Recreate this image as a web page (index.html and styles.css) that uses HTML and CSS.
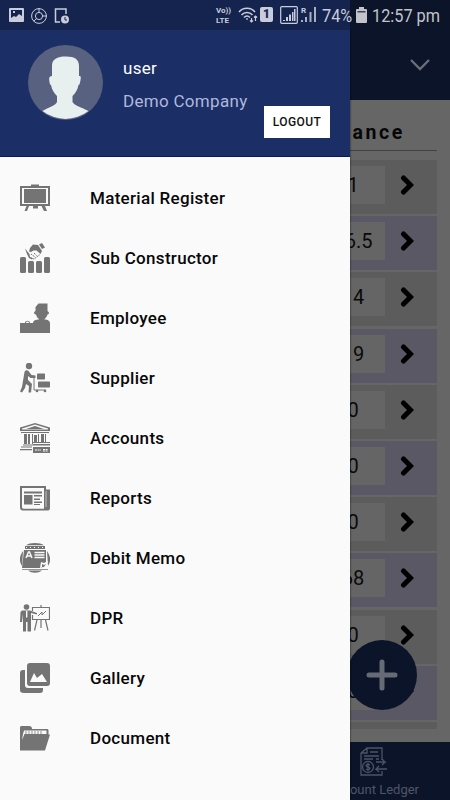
FILE: index.html
```html
<!DOCTYPE html>
<html lang="en">

<head>
    <meta charset="UTF-8">
    <meta name="viewport" content="width=device-width, initial-scale=1.0">
    <title>Demo Company</title>
    <link rel="stylesheet" href="styles.css">
</head>

<body>
    <svg width="0" height="0" class="defs">
        <symbol id="chevron" viewBox="0 0 14 20"><path d="M3.500 3l7 7-7 7" fill="none" stroke="#000" stroke-width="5" stroke-linecap="round"/></symbol>
    </svg>

    <div class="app">
        <!-- page under the drawer -->
        <div class="page">
            <div class="appbar">
                <svg width="22" height="14" viewBox="0 0 22 14"><path d="M2 2l9 9 9-9" fill="none" stroke="#696e79" stroke-width="2.400"/></svg>
            </div>
            <div class="content">
                <h2>Balance</h2>
                <div class="list">
                    <div class="row"><span>1</span><svg><use href="#chevron"/></svg></div>
                    <div class="row"><span>16.5</span><svg><use href="#chevron"/></svg></div>
                    <div class="row"><span>14</span><svg><use href="#chevron"/></svg></div>
                    <div class="row"><span>19</span><svg><use href="#chevron"/></svg></div>
                    <div class="row"><span>0</span><svg><use href="#chevron"/></svg></div>
                    <div class="row"><span>0</span><svg><use href="#chevron"/></svg></div>
                    <div class="row"><span>0</span><svg><use href="#chevron"/></svg></div>
                    <div class="row"><span>68</span><svg><use href="#chevron"/></svg></div>
                    <div class="row"><span>0</span><svg><use href="#chevron"/></svg></div>
                    <div class="row"><span>0</span><svg><use href="#chevron"/></svg></div>
                    <div class="row"></div>
                </div>
            </div>
            <div class="tabbar">
                <svg width="30" height="30" viewBox="0 0 30 30" fill="none" stroke="#4c5365" stroke-width="1.300">
                    <path d="M2 13V7l6-5h15v12M8 2v5H2M2 13v16h21v-4"/>
                    <path d="M11 6h8M5 10h15M5 13h9M17 13h3M17 16h9l-3-3M26 16l-3 3M28 23H17l3-3M17 23l3 3"/>
                    <circle cx="9" cy="21" r="5.500"/>
                    <path d="M11 19c-1-1-4-1-4 .7s4 1 4 2.600-3 1.700-4 .5M9 17v8"/>
                </svg>
                <span>Account Ledger</span>
            </div>
        </div>

        <div class="fab">
            <svg width="32" height="32" viewBox="0 0 32 32"><path d="M16 3v26M3 16h26" stroke="#666b75" stroke-width="5" stroke-linecap="round"/></svg>
        </div>

        <div class="drawer">
            <div class="profile">
                <svg class="avatar" width="75" height="75" viewBox="0 0 75 75">
                    <circle cx="37.500" cy="37.500" r="37.500" fill="#596180"/>
                    <path fill="#e8efef" d="M24 31V21c0-7 5-9.500 14-9.500s13 3 13 9.500v10c2 0 2 1 1.500 4s-1 5-2 5c-1 5-3 8-6 11v6c2 4 9 5 16 9a37.500 37.500 0 0 1-46 0c6-4 13-5 14.500-9v-6c-3-3-5-6-6-11-1 0-1.500-2-1.800-5s.8-4 2.800-4z"/>
                </svg>
                <div class="who">
                    <div class="name">user</div>
                    <div class="company">Demo Company</div>
                </div>
                <button class="logout">LOGOUT</button>
            </div>

            <ul class="menu">
                <li>
                    <svg viewBox="0 0 30 30"><path d="M11 3V1.500h8V3h11v20h-5l2 5h-3l-2.500-5H18v2.500h-5V23H9l-2 5H4.500l2-5H0V3zM2 5v16h26V5z" fill-rule="evenodd"/><path d="M4 6h22v14H4z"/></svg>
                    <span>Material Register</span>
                </li>
                <li>
                    <svg viewBox="0 0 30 30"><rect y="14" width="6" height="16" rx="1.500"/><rect x="8" y="18" width="6" height="12" rx="1.500"/><rect x="16" y="18" width="6" height="12" rx="1.500"/><rect x="24" y="14" width="6" height="16" rx="1.500"/><path d="M10 5l3-3.500 5 .5 4 6-1.500 3-4-3.500h-3L11 9l-2-.5zM19 1.500L22 0l3 4.500L22 6z"/><path d="M5 5.500l4.500 5.500.5 3 3 1.500-1 1-3-1.500-2-4z"/><path d="M9 14l5 2 6-4.500M11 11l4 3M14 10l3 3" fill="none" stroke="#747474" stroke-dasharray="1.500 .7"/></svg>
                    <span>Sub Constructor</span>
                </li>
                <li>
                    <svg viewBox="0 0 30 30"><path d="M15.500 8V4l3-3.500h9V8c2 1 2 3 0 3.500-.5 2.500-2 3.500-3 4.500v.5c3 0 5.500 1 5.500 4V30H0V20h5c0-3 5-3 5 0h3c0-2.500 3-3.500 6-3.500V16c-1.500-1-2.500-2-3-4.500-3-.5-2-3-.5-3.500z"/><path d="M6 20c0-2 3-2 3 0z" fill="#fafafa"/></svg>
                    <span>Employee</span>
                </li>
                <li>
                    <svg viewBox="0 0 30 30"><circle cx="9" cy="3" r="3.200"/><path d="M4.500 9c.5-2 3-2 4-1l3 4 4 .5V15h-5L8 13v4l4 4-1 8.500H8.500L9 23l-3-2-1 4-3 4.500-2-1L2 24z"/><path d="M14 13v14h12" fill="none" stroke="#747474"/><rect x="17" y="10.500" width="8" height="6" rx=".7"/><rect x="18" y="18.500" width="12" height="6" rx=".7"/><circle cx="17" cy="28" r="1.300"/><circle cx="25" cy="28" r="1.300"/></svg>
                    <span>Supplier</span>
                </li>
                <li>
                    <svg viewBox="0 0 30 30"><path d="M0 4.500L15 0l15 4.500V8H0zM2 5.500v1h26v-1L15 1.500z" fill-rule="evenodd"/><path d="M6 6l9-3 9 3zM1 9h28v1H1zM4 11h3v10H4zM8 11h2v10H8zM12 11h1v10h-1zM14 12h3v8h-3zM18 11h1v8h-1zM21 11h3v8h-3zM25 11h1v8h-1zM3 21.500h10v1H3zM1 23.500h11v1H1zM0 26h12v1.200H0zM13 19h17v1H13zM13 21h17v1.500H13zM13 24h17v6H13z"/><path d="M15 27h6M23 26.500h5M23 28h5" stroke="#fafafa" stroke-dasharray="2 .6"/></svg>
                    <span>Accounts</span>
                </li>
                <li>
                    <svg viewBox="0 0 30 30"><path fill-rule="evenodd" d="M0 3h26v3.500h4V25c0 2-1 2.500-3 2.500H3c-2 0-3-1-3-3zM2 5v19c0 1.200.5 1.700 1.500 1.700H24V5z"/><path d="M4 8.500h18v2H4zM4 12h8.500v9.500H4zM14 12h8v1.500h-8zM14 15.500h6V17h-6zM14 18.500h8V20h-8zM14 21h6v1h-6z"/><path d="M26 8v16" stroke="#fafafa" stroke-width=".6"/></svg>
                    <span>Reports</span>
                </li>
                <li>
                    <svg viewBox="0 0 30 30"><path d="M6 2.200C10-.7 20-.7 24 2.200zM3 8c-4 6-4 10-1 15zM27 8c4 6 4 10 1 15zM8 27.500h14c-4 3-10 3-14 0zM5 3h20v3H5zM4 7h22v12l-4 6H2z"/><path d="M6 4.500h19" stroke="#fafafa" stroke-width="1.200" stroke-dasharray="1 3"/><path d="M6 15l2.500-6h1L12 15M7 13h4M14.500 9.500h10M14.500 12h10M14.500 14.500h10" fill="none" stroke="#fafafa" stroke-width="1.400"/><path d="M20 25l1-6 3 1 4-2-3 6z" fill="#fafafa"/><path d="M22 24v-3l2 1 2-1-2 3zM2 26h26v.8H2z"/></svg>
                    <span>Debit Memo</span>
                </li>
                <li>
                    <svg viewBox="0 0 30 30"><circle cx="6.500" cy="4" r="2.800"/><path d="M2 7.500h8l7 2.500v1.500L11 10v18.500H7.500V19H6v9.500H3V11l-1 8H0l.5-10z"/><path d="M12.500 8V4.500h17v12h-17V12M21 2v2M17 17l-2.500 10.500M25.500 17l2.500 10.500M21 17v8" fill="none" stroke="#747474" stroke-width="1.200"/><path d="M18 13l4-4v3l4-4" fill="none" stroke="#747474"/><path d="M6 8v6l.7 1 .7-1V8z" fill="#fafafa"/></svg>
                    <span>DPR</span>
                </li>
                <li>
                    <svg viewBox="0 0 30 30"><path d="M10 0h17c2 0 3 1 3 3v17c0 2-1 3-3 3H10c-2 0-3-1-3-3V3c0-2 1-3 3-3zM3 7h2v15c0 2 1 3 3 3h15v2c0 2-1 3-3 3H4c-3 0-4-1-4-3V10c0-2 1-3 3-3z"/><path d="M10 19l4-9 3 5 5-4 5 8z" fill="#fafafa"/></svg>
                    <span>Gallery</span>
                </li>
                <li>
                    <svg viewBox="0 0 30 30"><path d="M0 5c0-1.500.5-2 2-2h7c2 0 3 1 3 3h15c1 0 1.500.5 1.500 1.500v4H30L25 27.500H0z"/><path d="M2 17l1-6 1-3.500h22.500V11H4.500z" fill="#fafafa"/><path d="M6 8v3M9 8v3M12 8v3M15 8v3M18 8v3M21 8v3" stroke="#747474" stroke-width=".8"/></svg>
                    <span>Document</span>
                </li>
            </ul>
        </div>

        <div class="statusbar">
            <div class="notifications">
                <svg width="15" height="15" viewBox="0 0 15 15"><path fill-rule="evenodd" fill="#c9cddb" d="M1 0h13q1 0 1 1v12q0 1-1 1H1q-1 0-1-1V1q0-1 1-1zM2 10l3-2 2 1 3-3 3 2V2H2zM4 3h2v2H4z"/></svg>
                <svg width="16" height="16" viewBox="0 0 16 16" fill="none" stroke="#c9cddb"><circle cx="8" cy="8" r="7.400"/><circle cx="8" cy="8" r="3.600"/><path d="M8 0v4.500M11.500 8H16M5.500 10.500l-2.700 2.700"/></svg>
                <svg width="15" height="16" viewBox="0 0 15 16"><path d="M6 14H1.500V1H12v5" fill="none" stroke="#c9cddb" stroke-width="1.500"/><circle cx="11" cy="11.500" r="4" fill="#c9cddb"/><path d="M11 9v3h2" fill="none" stroke="#15254d"/></svg>
            </div>
            <div class="system">
                <div class="volte"><span>Vo))</span><span>LTE</span></div>
                <svg class="wifi" width="20" height="16" viewBox="0 0 20 16" fill="none" stroke="#c9cddb" stroke-width="1.500"><path d="M1 5c4-5 12-5 16 0M3.500 8c3-3.500 8-3.500 11 0M6 10.500c2-2 4-2 6 0"/><path d="M9 11v2M13.500 11v4M12 13.500l1.500 1.500 1.500-1.500M17.500 14V9M16 10.500L17.500 9l1.500 1.500" stroke-width="1.200"/></svg>
                <div class="sim">1</div>
                <svg class="signal" width="18" height="18" viewBox="0 0 18 18"><rect x=".7" y=".7" width="16.600" height="16.600" rx="1" fill="none" stroke="#c9cddb" stroke-width="1.200"/><path d="M3 14h2v1H3zM6 11h2v4H6zM9 8.500h2V15H9zM12 6h1.500v9H12zM14 3h1.500v12H14z" fill="#c9cddb"/></svg>
                <div class="roaming">R<svg width="16" height="16" viewBox="0 0 16 16"><path d="M0 13h2v2H0zM4 10h2v5H4zM8.500 5h2v10h-2zM13 0h2v15h-2z" fill="#a9afc2"/></svg></div>
                <span class="percent">74%</span>
                <svg class="battery" width="11" height="16" viewBox="0 0 11 16"><path d="M3 0h5v2h2q1 0 1 1v12q0 1-1 1H1q-1 0-1-1V3q0-1 1-1h2z" fill="#c2c4ca"/><path d="M1.500 4h8v1.500h-8z" fill="#3f4556"/></svg>
                <span class="clock">12:57 pm</span>
            </div>
        </div>
    </div>
</body>

</html>
```
FILE: styles.css
```css
* {
    padding: 0;
    margin: 0;
    box-sizing: border-box;
}

body {
    font-family: Roboto, "Liberation Sans", sans-serif;
    background-color: #666;
}

svg {
    display: block;
    flex-shrink: 0;
}

.defs {
    position: absolute;
}

.app {
    position: relative;
    width: 450px;
    height: 800px;
    overflow: hidden;
}

/* page */
.page {
    display: flex;
    flex-direction: column;
    height: 800px;
    background-color: #666;
}

.appbar {
    display: flex;
    justify-content: flex-end;
    height: 100px;
    padding: 58px 19px 0 0;
    background-color: #0b1429;
}

.content {
    height: 642px;
    padding: 0 13px 13px;
    overflow: hidden;
    display: flex;
    flex-direction: column;
}

h2 {
    height: 51px;
    padding: 21px 32px 0 0;
    border-bottom: 1px solid #414141;
    text-align: right;
    font-size: 19.5px;
    line-height: 24px;
    letter-spacing: 2.6px;
    color: #060606;
    flex-shrink: 0;
}

.list {
    margin-top: 9px;
    flex: 1;
    overflow: hidden;
}

.row {
    display: flex;
    justify-content: flex-end;
    height: 54px;
    margin-bottom: 2.2px;
    padding: 6px 23px 0 0;
    background-color: #5c5c5c;
}

.row:nth-child(even) {
    background-color: #5a5864;
}

.row span {
    width: 64px;
    height: 38px;
    margin-right: 15px;
    background-color: #656565;
    color: #0a0a0a;
    font-size: 20px;
    line-height: 39px;
    text-align: center;
}

.row svg {
    width: 14px;
    height: 20px;
    margin-top: 9px;
}

.tabbar {
    flex: 1;
    display: flex;
    flex-direction: column;
    align-items: flex-end;
    padding-top: 4px;
    background-color: #0b1429;
}

.tabbar svg {
    margin-right: 61px;
}

.tabbar span {
    margin: 5px 31px 0 0;
    font-size: 13px;
    line-height: 18px;
    color: #505668;
}

.fab {
    position: absolute;
    left: 347px;
    top: 640px;
    width: 70px;
    height: 70px;
    border-radius: 50%;
    background-color: #0b1429;
    display: flex;
    align-items: center;
    justify-content: center;
}

/* drawer */
.drawer {
    position: absolute;
    left: 0;
    top: 0;
    width: 350px;
    height: 800px;
    background-color: #fafafa;
    box-shadow: 0 0 2px rgba(0, 0, 0, .7);
}

.profile {
    display: flex;
    height: 157px;
    padding: 45px 20px 0 28px;
    background-color: #1b2f66;
    border-bottom: 1px solid #0b1b52;
}

.who {
    width: 128px;
    margin-left: 20px;
    font-size: 17px;
    line-height: 22px;
    letter-spacing: .3px;
    white-space: nowrap;
}

.name {
    margin-top: 12px;
    color: #fff;
}

.company {
    margin-top: 11px;
    color: #b0b8dc;
}

.logout {
    width: 66px;
    height: 32px;
    margin: 61px 0 0 auto;
    border: none;
    background-color: #fff;
    color: #111;
    font-family: inherit;
    font-size: 12px;
    font-weight: 500;
    letter-spacing: .4px;
}

.menu {
    list-style: none;
    padding-top: 11px;
}

.menu li {
    display: flex;
    align-items: center;
    height: 60px;
    padding-left: 20px;
    font-size: 17px;
    font-weight: 500;
    letter-spacing: .3px;
    color: #080808;
}

.menu svg {
    width: 30px;
    height: 30px;
    margin-right: 40px;
    fill: #747474;
}

/* status bar */
.statusbar {
    position: absolute;
    left: 0;
    top: 0;
    width: 450px;
    height: 30px;
    display: flex;
    justify-content: space-between;
    background: linear-gradient(to right, #15244e 350px, #0b1429 350px);
    color: #c9cddb;
}

.notifications {
    display: flex;
    gap: 7px;
    padding: 8px 0 0 9px;
}

.system {
    display: flex;
    padding: 7px 10px 0 0;
    white-space: nowrap;
}

.volte {
    display: flex;
    flex-direction: column;
    width: 16px;
    margin: -1px 6px 0 0;
    font-size: 8px;
    font-weight: 700;
    line-height: 10px;
}

.sim {
    width: 13px;
    height: 15px;
    margin: 0 7px 0 2px;
    border-radius: 2px;
    background-color: #c9cddb;
    color: #15244e;
    font-size: 12px;
    font-weight: 900;
    line-height: 15px;
    text-align: center;
}

.signal {
    margin-top: -1px;
}

.roaming {
    width: 18px;
    margin-left: 3px;
    font-size: 8px;
    font-weight: 700;
    line-height: 8px;
}

.roaming svg {
    margin-top: -8px;
}

/* narrow digits */
.percent,
.clock {
    font-size: 18.5px;
    line-height: 18px;
    transform: scaleX(.88);
    transform-origin: left;
}

.percent {
    width: 30px;
    margin: 0 4px 0 3px;
}

.battery {
    margin-right: 5px;
}

.clock {
    width: 68px;
    color: #c2c4ca;
}
```
